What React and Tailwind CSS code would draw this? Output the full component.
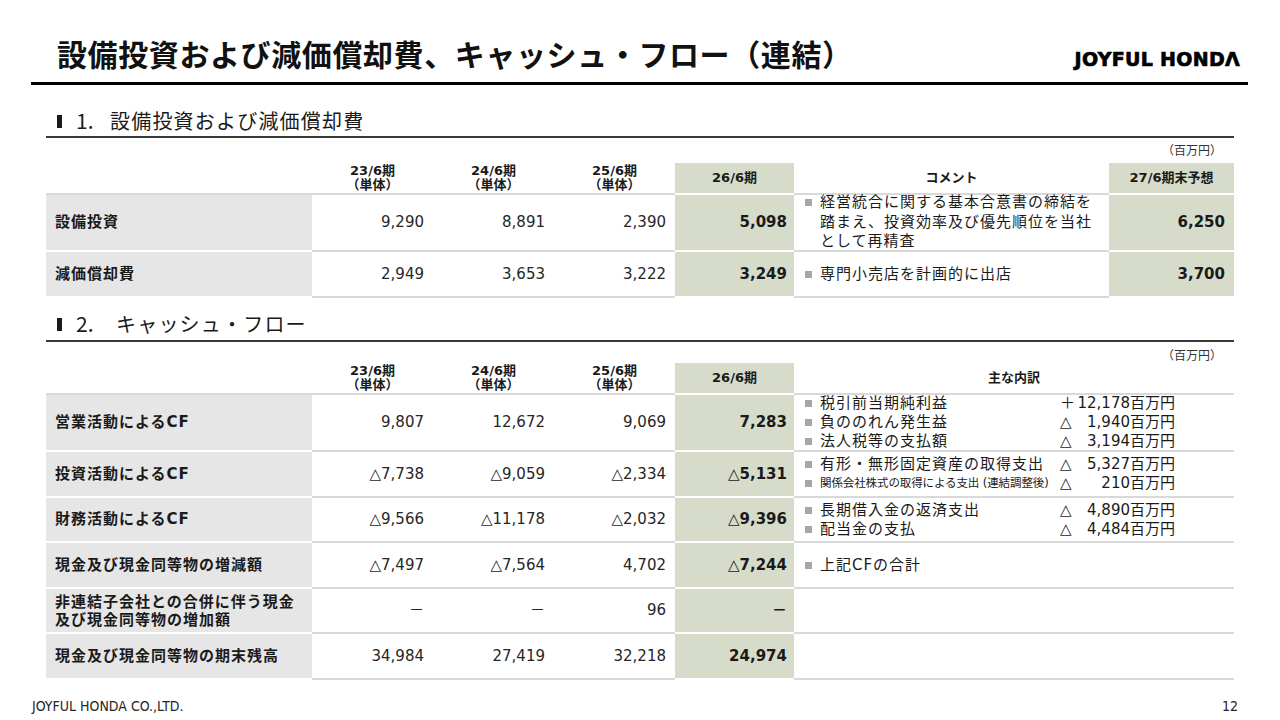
import React from "react";

const LBL = "w-[266px] shrink-0 bg-[#e7e6e6] border-b-2 border-white flex items-center pl-[9px] font-bold text-[15px] tracking-[1px] text-[#1a1a1a]";
const NUM = "w-[121px] shrink-0 border-b-2 border-[#d9d9d9] flex items-center justify-end pr-[9px] text-[15px] text-[#262626]";
const G26 = "w-[119px] shrink-0 bg-[#d6dbca] border-b-2 border-white flex items-center justify-end pr-[7px] text-[15px] font-bold text-[#1a1a1a]";
const HEAD = "w-[121px] shrink-0 border-b-2 border-[#d9d9d9] flex flex-col items-center justify-center text-[13px] leading-[14px] font-bold text-[#1a1a1a]";

function Val({ v }) {
  if (typeof v === "string" && v.startsWith("△")) {
    return (
      <span>
        <span className="font-normal">△</span>
        {v.slice(1)}
      </span>
    );
  }
  return <span>{v}</span>;
}

function Bullet({ className = "" }) {
  return <span className={"w-[7px] h-[7px] shrink-0 bg-[#a6a6a6] " + className} />;
}

function Heading({ num, numW, text }) {
  return (
    <div className="ml-[57px] h-[28px] flex items-center">
      <span className="w-[5px] h-[13px] bg-[#1a1a1a] shrink-0" />
      <span className={"ml-[14px] shrink-0 text-[21px] text-[#1a1a1a] " + numW}>{num}</span>
      <span className="text-[20px] tracking-[1.2px] text-[#1a1a1a]">{text}</span>
    </div>
  );
}

function PeriodHeads() {
  return (
    <>
      {["23/6期", "24/6期", "25/6期"].map((p) => (
        <div key={p} className={HEAD}>
          <span>{p}</span>
          <span>（単体）</span>
        </div>
      ))}
      <div className="w-[119px] shrink-0 bg-[#d6dbca] border-b-2 border-white flex items-center justify-center text-[13px] font-bold text-[#1a1a1a]">
        26/6期
      </div>
    </>
  );
}

function Item({ text, sign, amt, small }) {
  return (
    <div className="flex items-center h-[19px]">
      <Bullet />
      <span
        className={
          "ml-[8px] w-[237px] shrink-0 whitespace-nowrap " +
          (small ? "text-[11.5px] tracking-[-0.1px]" : "text-[15px] tracking-[1px]")
        }
      >
        {text}
      </span>
      {amt && (
        <span className="w-[118px] shrink-0 flex justify-between text-[15px] pl-[3px]">
          <span>{sign}</span>
          <span>{amt}</span>
        </span>
      )}
    </div>
  );
}

const cfRows = [
  {
    h: "h-[57px]",
    label: "営業活動によるCF",
    v: ["9,807", "12,672", "9,069"],
    v26: "7,283",
    items: [
      { text: "税引前当期純利益", sign: "＋", amt: "12,178百万円" },
      { text: "負ののれん発生益", sign: "△", amt: "1,940百万円" },
      { text: "法人税等の支払額", sign: "△", amt: "3,194百万円" },
    ],
  },
  {
    h: "h-[46px]",
    label: "投資活動によるCF",
    v: ["△7,738", "△9,059", "△2,334"],
    v26: "△5,131",
    items: [
      { text: "有形・無形固定資産の取得支出", sign: "△", amt: "5,327百万円" },
      { text: "関係会社株式の取得による支出 (連結調整後)", sign: "△", amt: "210百万円", small: true },
    ],
  },
  {
    h: "h-[45px]",
    label: "財務活動によるCF",
    v: ["△9,566", "△11,178", "△2,032"],
    v26: "△9,396",
    items: [
      { text: "長期借入金の返済支出", sign: "△", amt: "4,890百万円" },
      { text: "配当金の支払", sign: "△", amt: "4,484百万円" },
    ],
  },
  {
    h: "h-[46px]",
    label: "現金及び現金同等物の増減額",
    v: ["△7,497", "△7,564", "4,702"],
    v26: "△7,244",
    items: [{ text: "上記CFの合計" }],
  },
  {
    h: "h-[45px]",
    label: (
      <span className="leading-[18px]">
        非連結子会社との合併に伴う現金
        <br />
        及び現金同等物の増加額
      </span>
    ),
    v: ["－", "－", "96"],
    v26: "－",
    items: [],
  },
  {
    h: "h-[46px]",
    label: "現金及び現金同等物の期末残高",
    v: ["34,984", "27,419", "32,218"],
    v26: "24,974",
    items: [],
  },
];

export default function App() {
  return (
    <div className="w-[1280px] h-[720px] bg-white overflow-hidden font-['DejaVu_Sans','Noto_Sans_CJK_JP',sans-serif] text-[#1a1a1a]">
      {/* Title */}
      <div className="flex items-start justify-between pt-[35px] pl-[57px] pr-[40px]">
        <h1 className="text-[30px] leading-[36px] tracking-[0.6px] font-bold text-[#111] font-['Noto_Sans_CJK_JP',sans-serif]">
          設備投資および減価償却費、キャッシュ・フロー（連結）
        </h1>
        <div className="mt-[15px] text-[19px] leading-[19px] font-bold text-black font-['DejaVu_Sans',sans-serif] tracking-[0.3px] [-webkit-text-stroke:0.7px_#000]">
          JOYFUL HONDΛ
        </div>
      </div>
      <div className="ml-[31px] mt-[11px] w-[1217px] h-[3px] bg-black" />

      {/* Section 1 */}
      <div className="mt-[22px] font-['Noto_Sans_CJK_JP',sans-serif]">
        <Heading num="1." numW="w-[34px]" text="設備投資および減価償却費" />
      </div>
      <div className="ml-[46px] mt-[1px] w-[1188px] h-[2px] bg-[#3a3a3a]" />
      <div className="ml-[46px] w-[1188px] mt-[4px] h-[16px] flex justify-end pr-[12px] text-[12px] leading-[16px] font-['Noto_Sans_CJK_JP',sans-serif] text-[#333]">
        （百万円）
      </div>

      <div className="ml-[46px] mt-[5px] w-[1188px] flex flex-col">
        <div className="flex h-[32px]">
          <div className="w-[266px] shrink-0 border-b-2 border-[#d9d9d9]" />
          <PeriodHeads />
          <div className="w-[315px] shrink-0 border-b-2 border-[#d9d9d9] flex items-center justify-center text-[13px] font-bold">
            コメント
          </div>
          <div className="w-[125px] shrink-0 bg-[#d6dbca] border-b-2 border-white flex items-center justify-center text-[13px] font-bold">
            27/6期末予想
          </div>
        </div>

        <div className="flex h-[57px]">
          <div className={LBL}>設備投資</div>
          {["9,290", "8,891", "2,390"].map((v, i) => (
            <div key={i} className={NUM}>{v}</div>
          ))}
          <div className={G26}>5,098</div>
          <div className="w-[315px] shrink-0 border-b-2 border-[#d9d9d9] flex items-center pl-[11px]">
            <div className="flex items-start">
              <Bullet className="mt-[6px]" />
              <span className="ml-[8px] text-[15px] leading-[19.5px] tracking-[1px]">
                経営統合に関する基本合意書の締結を
                <br />
                踏まえ、投資効率及び優先順位を当社
                <br />
                として再精査
              </span>
            </div>
          </div>
          <div className="w-[125px] shrink-0 bg-[#d6dbca] border-b-2 border-white flex items-center justify-end pr-[9px] text-[15px] font-bold">
            6,250
          </div>
        </div>

        <div className="flex h-[46px]">
          <div className={LBL}>減価償却費</div>
          {["2,949", "3,653", "3,222"].map((v, i) => (
            <div key={i} className={NUM}>{v}</div>
          ))}
          <div className={G26}>3,249</div>
          <div className="w-[315px] shrink-0 border-b-2 border-[#d9d9d9] flex items-center pl-[11px]">
            <Bullet />
            <span className="ml-[8px] text-[15px] tracking-[1px]">専門小売店を計画的に出店</span>
          </div>
          <div className="w-[125px] shrink-0 bg-[#d6dbca] border-b-2 border-white flex items-center justify-end pr-[9px] text-[15px] font-bold">
            3,700
          </div>
        </div>
      </div>

      {/* Section 2 */}
      <div className="mt-[12px] font-['Noto_Sans_CJK_JP',sans-serif]">
        <Heading num="2." numW="w-[40px]" text="キャッシュ・フロー" />
      </div>
      <div className="ml-[46px] mt-[2px] w-[1188px] h-[2px] bg-[#3a3a3a]" />
      <div className="ml-[46px] w-[1188px] mt-[5px] h-[16px] flex justify-end pr-[12px] text-[12px] leading-[16px] font-['Noto_Sans_CJK_JP',sans-serif] text-[#333]">
        （百万円）
      </div>

      <div className="ml-[46px] w-[1188px] flex flex-col">
        <div className="flex h-[32px]">
          <div className="w-[266px] shrink-0 border-b-2 border-[#d9d9d9]" />
          <PeriodHeads />
          <div className="w-[440px] shrink-0 border-b-2 border-[#d9d9d9] flex items-center justify-center text-[13px] font-bold">
            主な内訳
          </div>
        </div>
        {cfRows.map((r, idx) => (
          <div key={idx} className={"flex " + r.h}>
            <div className={LBL}>{r.label}</div>
            {r.v.map((v, i) => (
              <div key={i} className={NUM}>
                <Val v={v} />
              </div>
            ))}
            <div className={G26}>
              <Val v={r.v26} />
            </div>
            <div className="w-[440px] shrink-0 border-b-2 border-[#d9d9d9] flex flex-col justify-center pl-[11px] leading-[19px]">
              {r.items.map((it, j) => (
                <Item key={j} {...it} />
              ))}
            </div>
          </div>
        ))}
      </div>

      {/* Footer */}
      <div className="mt-[18px] flex justify-between pl-[32px] pr-[42px] text-[14px] leading-[16px] text-[#262626] font-['DejaVu_Sans_Condensed','Noto_Sans',sans-serif]">
        <span>JOYFUL HONDA CO.,LTD.</span>
        <span>12</span>
      </div>
    </div>
  );
}
